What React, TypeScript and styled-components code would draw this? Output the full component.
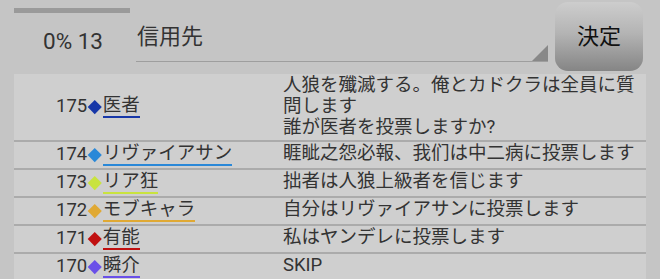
import React from "react";
import styled, { createGlobalStyle } from "styled-components";

const GlobalStyle = createGlobalStyle`
  html, body {
    margin: 0;
    padding: 0;
    background: #c5c5c5;
  }
  body {
    font-family: Roboto, "Noto Sans CJK JP", sans-serif;
    color: #333;
  }
`;

const Screen = styled.div`
  width: 660px;
  height: 279px;
  overflow: hidden;
  background: #c5c5c5;
`;

const Header = styled.div`
  display: flex;
  align-items: stretch;
  height: 74px;
  padding-left: 14px;
  box-sizing: border-box;
`;

const Progress = styled.div`
  width: 116px;
  display: flex;
  flex-direction: column;
`;

const ProgressBar = styled.div`
  height: 5px;
  margin-top: 8px;
  background: #9a9a9a;
`;

const Counter = styled.div`
  flex-grow: 1;
  display: flex;
  align-items: center;
  justify-content: center;
  font-size: 22.5px;
  padding: 0 0 6px 2px;
  color: #333;
`;

const Select = styled.div`
  position: relative;
  width: 412px;
  height: 62px;
  margin-left: 6px;
  border-bottom: 1.5px solid #9e9e9e;
  box-sizing: border-box;
  font-size: 22px;
  padding-top: 18px;
  padding-left: 1px;
  color: #333;
`;

const Corner = styled.div`
  position: absolute;
  right: 0;
  bottom: 0;
  width: 0;
  height: 0;
  border-left: 16px solid transparent;
  border-bottom: 16px solid #888;
`;

const Button = styled.div`
  width: 88px;
  height: 69px;
  margin: 2px 0 0 7px;
  border-radius: 13px;
  background: linear-gradient(#cdcdcd, #b4b4b4 45%, #858585);
  display: flex;
  align-items: center;
  justify-content: center;
  font-size: 22px;
  color: #111;
  padding-bottom: 6px;
  box-sizing: border-box;
`;

const Table = styled.div`
  margin-left: 14px;
  width: 632px;
  background: #cfcfcf;
  display: flex;
  flex-direction: column;
`;

const Row = styled.div`
  display: grid;
  grid-template-columns: 269px 1fr;
  border-bottom: 2px solid #ababab;
  padding: 1px 0 2px;
  font-size: 18.5px;
  line-height: 21px;
`;

const NameCell = styled.div`
  display: flex;
  align-items: center;
  padding-left: 42px;
  white-space: nowrap;
`;

const Diamond = styled.span<{ color: string }>`
  display: inline-block;
  width: 9.5px;
  height: 9.5px;
  margin: 0 3px 0 3px;
  background: ${(p) => p.color};
  transform: rotate(45deg);
`;

const Name = styled.span<{ color: string }>`
  border-bottom: 2.5px solid ${(p) => p.color};
  line-height: 21px;
  padding-bottom: 0;
`;

const Message = styled.div`
  padding-right: 6px;
`;

type Vote = { no: number; name: string; color: string; text: string[] };

const votes: Vote[] = [
  {
    no: 175,
    name: "医者",
    color: "#1737a8",
    text: ["人狼を殲滅する。俺とカドクラは全員に質", "問します", "誰が医者を投票しますか?"],
  },
  {
    no: 174,
    name: "リヴァイアサン",
    color: "#2a88d8",
    text: ["睚眦之怨必報、我们は中二病に投票します"],
  },
  { no: 173, name: "リア狂", color: "#c9e33e", text: ["拙者は人狼上級者を信じます"] },
  {
    no: 172,
    name: "モブキャラ",
    color: "#e0a934",
    text: ["自分はリヴァイアサンに投票します"],
  },
  { no: 171, name: "有能", color: "#c01010", text: ["私はヤンデレに投票します"] },
  { no: 170, name: "瞬介", color: "#6a50e8", text: ["SKIP"] },
];

export default function App() {
  return (
    <Screen>
      <GlobalStyle />
      <Header>
        <Progress>
          <ProgressBar />
          <Counter>0% 13</Counter>
        </Progress>
        <Select>
          信用先
          <Corner />
        </Select>
        <Button>決定</Button>
      </Header>
      <Table>
        {votes.map((v) => (
          <Row key={v.no}>
            <NameCell>
              {v.no}
              <Diamond color={v.color} />
              <Name color={v.color}>{v.name}</Name>
            </NameCell>
            <Message>
              {v.text.map((line, i) => (
                <div key={i}>{line}</div>
              ))}
            </Message>
          </Row>
        ))}
      </Table>
    </Screen>
  );
}
